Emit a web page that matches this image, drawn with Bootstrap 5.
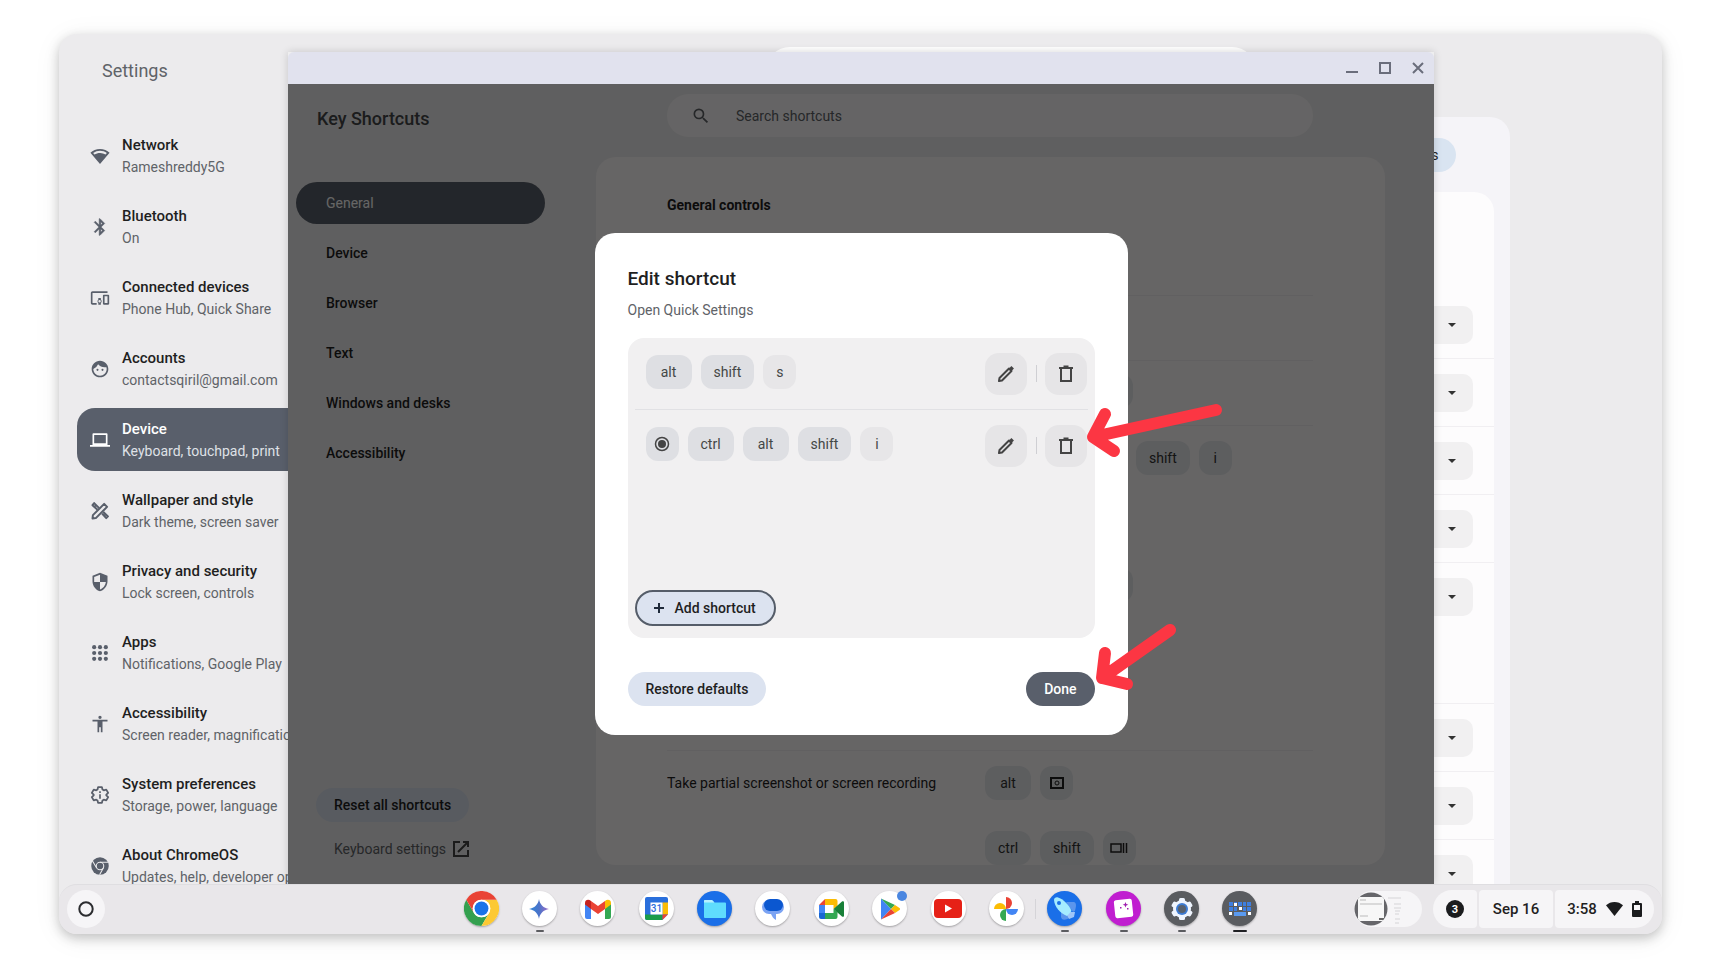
<!DOCTYPE html>
<html lang="en">
<head>
<meta charset="utf-8">
<meta name="viewport" content="width=device-width, initial-scale=1">
<title>Key Shortcuts</title>
<link href="https://cdn.jsdelivr.net/npm/bootstrap@5.3.0/dist/css/bootstrap.min.css" rel="stylesheet">
<style>
  :root { --slate: #595f6b; --tint: #dce3f0; --ink: #1f1f1f; --ink-2: #5f6368; }
  body { font-family: Roboto, "Liberation Sans", sans-serif; font-size: 14px; line-height: 20px; color: var(--ink); background: #fff; padding: 34px 59px; height: 100vh; min-height: 600px; overflow: hidden; }
  button, input, select { font: inherit; color: inherit; }
  svg { display: block; flex: none; }

  .os-screen { background: #ecebed; border-radius: 18px; box-shadow: 0 4px 12px rgba(0,0,0,.22), 0 4px 30px rgba(0,0,0,.06); }
  .os-desktop { min-height: 0; }

  /* Settings window */
  .set-side { width: 300px; }
  .set-title { font-size: 18px; line-height: 24px; color: var(--ink-2); padding: 25px 0 41px 43px; }
  .set-nav { padding-left: 18px; gap: 8px; }
  .set-item { height: 63px; padding-left: 13px; gap: 12px; border-radius: 18px; color: var(--ink); text-decoration: none; line-height: 22px; white-space: nowrap; }
  .set-item svg { width: 20px; height: 20px; fill: var(--slate); }
  .set-item strong { display: block; font-size: 15px; font-weight: 500; }
  .set-item span span { color: var(--ink-2); }
  .set-item.on { background: var(--slate); color: #fff; }
  .set-item.on svg { fill: #fff; }
  .set-item.on span span { color: #dfe1e6; }
  .set-search { width: 490px; height: 48px; margin-top: 13px; border: 0; border-radius: 24px; background: #fff; }
  .set-panel { width: 100%; max-width: 998px; margin-top: 22px; padding: 0 16px; background: #f5f4f8; border-radius: 20px 20px 0 0; }
  .set-bar { height: 75px; padding-right: 38px; }
  .set-chip { height: 34px; width: 90px; padding-right: 17px; border: 0; border-radius: 17px; background: #d9e4f1; text-align: right; }
  .set-card { background: #fdfcfd; border-radius: 20px 20px 0 0; padding-top: 99px; }
  .set-row { height: 68px; padding-right: 21px; border-bottom: 1px solid #f1eff2; }
  .set-gap { height: 73px; border-bottom: 1px solid #f1eff2; }
  .set-row select { width: 160px; height: 38px; border: 0; border-radius: 10px; appearance: none; background: #f1f0f1 url("data:image/svg+xml,%3Csvg xmlns='http://www.w3.org/2000/svg' viewBox='0 0 8 4'%3E%3Cpath fill='%23333' d='M0 0h8L4 4z'/%3E%3C/svg%3E") no-repeat right 17px center / 8px 4px; }

  /* Key Shortcuts window */
  .key-win { position: absolute; inset: 18px 228px 0 229px; box-shadow: 0 0 8px rgba(0,0,0,.16); background: #eeeeef; }
  .key-bar { height: 32px; background: #e1e2ee; border-radius: 6px 6px 0 0; padding-right: 8px; gap: 17px; }
  .key-bar button { border: 0; background: none; padding: 0; width: 16px; height: 16px; }
  .key-body { min-height: 0; }
  .key-side { width: 308px; padding: 0 51px 25px 8px; }
  .key-title { font-size: 18px; line-height: 24px; font-weight: 500; color: #45464a; padding: 23px 0 51px 21px; }
  .key-nav { gap: 8px; }
  .key-nav a { height: 42px; line-height: 42px; padding-left: 30px; border-radius: 21px; color: var(--ink); text-decoration: none; font-weight: 500; }
  .key-nav a.on { background: var(--slate); color: #fff; font-weight: 400; }
  .pill { height: 34px; border: 0; border-radius: 17px; background: var(--tint); padding: 0 18px; font-weight: 500; }
  .key-side .pill { margin-left: 20px; }
  .key-link { margin: 17px 0 0 38px; gap: 7px; color: #5f6368; text-decoration: none; }
  .key-main { padding: 10px 49px 19px 0; min-width: 0; }
  .key-search { height: 43px; margin: 0 72px 20px 71px; padding-left: 24px; gap: 25px; border-radius: 22px; background: #fdfbfc; }
  .key-search input { border: 0; background: none; outline: 0; padding: 0; }
  .key-search input::placeholder { color: #5f6368; opacity: 1; }
  .key-panel { background: #fffcfd; border-radius: 20px; padding: 0 72px 0 71px; min-height: 0; }
  .key-head { line-height: 20px; padding: 38px 0 15px; font-size: 14px; font-weight: 700; margin: 0; }
  .key-row { height: 65px; flex: none; }
  .key-row.rule { border-top: 1px solid #f2f1f3; }
  .key-row > span:first-child { flex: 0 0 318px; }
  .combo { gap: 9px; }
  .keycap { display: inline-flex; align-items: center; justify-content: center; min-width: 46px; height: 34px; padding: 0 13px; border-radius: 12px; background: #dedfe3; color: #444746; font: inherit; }
  .keycap.sq { min-width: 33px; padding: 0; }
  .keycap.soft { background: #e7e6e8; }
  .key-row .keycap { background: #e8eaed; color: #333; }
  .push-a { margin-left: 115px; }
  .push-b { margin-left: 151px; }

  /* Dialog */
  .scrim { position: absolute; inset: 32px 0 0 0; background: rgba(0,0,0,.6); }
  .dlg { position: relative; width: 533px; background: #fff; border-radius: 20px; padding: 33px 33px 29px; }
  .dlg h1 { font-size: 19px; line-height: 26px; font-weight: 500; margin: 0 0 8px; }
  .dlg p { margin: 0 0 18px; color: var(--ink-2); }
  .dlg-box { height: 300px; background: #f1f0f1; border-radius: 16px; margin-bottom: 34px; padding: 0 7px 12px; }
  .dlg-row { height: 71px; padding: 0 1px 0 11px; }
  .dlg-row + .dlg-row { border-top: 1px solid #e1e1e4; height: 72px; }
  .dlg-row .combo { padding-bottom: 3px; }
  .tool { width: 42px; height: 42px; border: 0; border-radius: 14px; background: #e6e5e7; padding: 0; display: flex; align-items: center; justify-content: center; }
  .tool-rule { width: 1px; height: 17px; background: #cfcfd3; margin: 0 8px 0 9px; }
  .add { height: 36px; border: 2px solid #555d69; border-radius: 18px; background: var(--tint); font-weight: 500; padding: 0 18px 0 15px; gap: 9px; }
  .done { background: var(--slate); color: #fff; }
  .callout-arrow { position: absolute; fill: none; stroke: #fc3643; stroke-width: 12; stroke-linecap: round; stroke-linejoin: round; pointer-events: none; }
  .arrow-delete { left: 480px; top: 165px; }
  .arrow-done { left: 490px; top: 385px; }

  /* Shelf */
  .shelf { display: grid; grid-template-columns: 1fr 794px 1fr; align-items: center; height: 50px; padding: 0 8px 2px; background: #e9e7ea; border-radius: 18px; border-top: 1px solid #dfdee1; position: relative; }
  .launch { width: 38px; height: 38px; border: 0; border-radius: 50%; background: #f6f5f7; padding: 0; display: flex; align-items: center; justify-content: center; }
  .app { position: relative; width: 35px; height: 35px; border: 0; border-radius: 50%; background: #fff; padding: 0; box-shadow: 0 1px 2px rgba(0,0,0,.3); display: flex; align-items: center; justify-content: center; }
  .app-blue { background: #1a6fe8; }
  .app-pink { background: #c01ed0; }
  .app-gray { background: #5a5c60; }
  .app.run::after { content: ""; position: absolute; bottom: -6px; left: 14px; width: 8px; height: 2px; border-radius: 1px; background: #5b5c60; }
  .app.now::after { left: 11px; width: 14px; background: #202124; }
  .app.split::before { content: ""; position: absolute; left: -12px; top: 8px; width: 1px; height: 20px; background: #d5d4d8; }
  .dot { position: absolute; right: 0; top: 0; width: 10px; height: 10px; border-radius: 50%; background: #4a86e0; }
  .tray { gap: 2px; font-size: 15px; font-weight: 500; white-space: nowrap; }
  .tray button { height: 38px; border: 0; background: #f6f5f7; font-weight: 500; padding: 0; display: flex; align-items: center; justify-content: center; border-radius: 4px; }
  .tray .peek { width: 68px; height: 36px; border-radius: 18px; margin-right: 9px; justify-content: flex-start; }
  .tray .notes { width: 44px; border-radius: 19px 4px 4px 19px; }
  .tray .day { width: 74px; }
  .tray .clock { width: 99px; gap: 9px; border-radius: 4px 19px 19px 4px; }
</style>
</head>
<body>
<main class="os-screen d-flex flex-column h-100">
  <div class="os-desktop position-relative flex-fill overflow-hidden">
    <section class="d-flex h-100 overflow-hidden" aria-label="Settings">
      <div class="set-side flex-shrink-0">
        <div class="set-title">Settings</div>
        <nav class="set-nav d-flex flex-column">
          <a href="#" class="set-item d-flex align-items-center"><svg viewBox="0 0 24 24"><path fill-rule="evenodd" d="M12 3.500C7.500 3.500 3.300 5.300.500 8.200L12 21.500 23.500 8.200C20.700 5.300 16.500 3.500 12 3.500zm0 2.300c3 0 5.900 1 8.200 2.600l-1.500 1.800A12 12 0 0 0 12 8.300c-2.500 0-4.800.7-6.700 1.900L3.800 8.400A14.500 14.500 0 0 1 12 5.800z"/></svg><span><strong>Network</strong><span>Rameshreddy5G</span></span></a>
          <a href="#" class="set-item d-flex align-items-center"><svg viewBox="0 0 24 24"><path stroke="#595f6b" stroke-width=".6" d="M17.700 7.700 12 2h-1v7.600L6.400 5 5 6.400l5.600 5.600L5 17.600 6.400 19l4.600-4.600V22h1l5.700-5.700-4.300-4.300 4.300-4.300zM13 5.800l1.900 1.900L13 9.600V5.800zm1.900 10.500L13 18.200v-3.800l1.900 1.900z"/></svg><span><strong>Bluetooth</strong><span>On</span></span></a>
          <a href="#" class="set-item d-flex align-items-center"><svg viewBox="0 0 24 24"><path fill-rule="evenodd" d="M3 6h18V4H3c-1.100 0-2 .9-2 2v12c0 1.100.9 2 2 2h5v-2H3V6zm10 6H10v1.800c-.6.500-1 1.300-1 2.200s.4 1.700 1 2.200V20h3v-1.800c.6-.5 1-1.300 1-2.200s-.4-1.700-1-2.200V12zm-1.500 5.500a1.500 1.500 0 1 1 0-3 1.500 1.500 0 0 1 0 3zM22 8h-5.500c-.5 0-1 .5-1 1v10c0 .5.5 1 1 1H22c.5 0 1-.5 1-1V9c0-.5-.5-1-1-1zm-1 10h-3.500v-8H21v8z"/></svg><span><strong>Connected devices</strong><span>Phone Hub, Quick Share</span></span></a>
          <a href="#" class="set-item d-flex align-items-center"><svg viewBox="0 0 24 24"><path d="M10.250 13a1.250 1.250 0 1 1-2.500 0 1.250 1.250 0 0 1 2.500 0zM15 11.750a1.250 1.250 0 1 0 0 2.500 1.250 1.250 0 0 0 0-2.500zM22 12c0 5.520-4.480 10-10 10S2 17.520 2 12 6.480 2 12 2s10 4.480 10 10zm-2 0c0-.78-.12-1.530-.33-2.240-.7.150-1.420.240-2.170.240-3.130 0-5.920-1.440-7.760-3.690A10 10 0 0 1 4 11.860V12c0 4.410 3.590 8 8 8s8-3.590 8-8z"/></svg><span><strong>Accounts</strong><span>contactsqiril@gmail.com</span></span></a>
          <a href="#" class="set-item on d-flex align-items-center"><svg viewBox="0 0 24 24"><path d="M21 18V5a1 1 0 0 0-1-1H4a1 1 0 0 0-1 1v13H0v2h24v-2zM5 6h14v10H5z"/></svg><span><strong>Device</strong><span>Keyboard, touchpad, print</span></span></a>
          <a href="#" class="set-item d-flex align-items-center"><svg viewBox="0 0 24 24"><g fill="none" stroke="#595f6b" stroke-width="2.400" stroke-linejoin="round"><path d="M3 21l.5-4L17 3.500 20.500 7 7 20.500z"/><path d="M9 10.500 3 5 5 2.500 11 8.500M7.500 4.500 6 6M14.500 15l5 5.500 2-2L16 13M19 15.500l-1.500 1.500"/></g></svg><span><strong>Wallpaper and style</strong><span>Dark theme, screen saver</span></span></a>
          <a href="#" class="set-item d-flex align-items-center"><svg viewBox="0 0 24 24"><path fill-rule="evenodd" d="M12 1 3 4.500v6.500c0 5.550 3.840 10.740 9 12 5.160-1.260 9-6.450 9-12V4.500zM12 3.200V12H5c.5 4.100 3.300 7.800 7 8.900V12h7V5.900z" transform="matrix(-1 0 0 1 24 0)"/></svg><span><strong>Privacy and security</strong><span>Lock screen, controls</span></span></a>
          <a href="#" class="set-item d-flex align-items-center"><svg viewBox="0 0 24 24"><g><circle cx="5" cy="5" r="2.500"/><circle cx="12" cy="5" r="2.500"/><circle cx="19" cy="5" r="2.500"/><circle cx="5" cy="12" r="2.500"/><circle cx="12" cy="12" r="2.500"/><circle cx="19" cy="12" r="2.500"/><circle cx="5" cy="19" r="2.500"/><circle cx="12" cy="19" r="2.500"/><circle cx="19" cy="19" r="2.500"/></g></svg><span><strong>Apps</strong><span>Notifications, Google Play</span></span></a>
          <a href="#" class="set-item d-flex align-items-center"><svg viewBox="0 0 24 24"><path d="M12 2a2 2 0 1 1 0 4 2 2 0 0 1 0-4zm9 7h-6v13h-2v-6h-2v6H9V9H3V7h18v2z"/></svg><span><strong>Accessibility</strong><span>Screen reader, magnification</span></span></a>
          <a href="#" class="set-item d-flex align-items-center"><svg viewBox="0 0 24 24"><path fill="none" stroke="#595f6b" stroke-width="2.200" stroke-linejoin="round" d="M9.700 2.500h4.600l.7 3 1.500.9 3-.9 2.300 4-2.200 2v1l2.200 2-2.300 4-3-.9-1.500.9-.7 3H9.700l-.7-3-1.500-.9-3 .9-2.300-4 2.200-2v-1l-2.200-2 2.300-4 3 .9 1.500-.9z"/><path d="M11 7.500h2v2h-2zM11 11h2v5.500h-2z"/></svg><span><strong>System preferences</strong><span>Storage, power, language</span></span></a>
          <a href="#" class="set-item d-flex align-items-center"><svg viewBox="0 0 24 24"><circle cx="12" cy="12" r="10.500"/><g fill="none" stroke="#ecebed" stroke-width="1.300"><circle cx="12" cy="12" r="4.500"/><path d="M12 7.500h10M8 14.300 3 6M16 14.300 11.500 22.500"/></g></svg><span><strong>About ChromeOS</strong><span>Updates, help, developer options</span></span></a>
        </nav>
      </div>
      <div class="flex-fill d-flex flex-column align-items-center">
        <input class="set-search flex-shrink-0" type="search" aria-label="Search settings">
        <div class="set-panel flex-fill">
          <div class="set-bar d-flex align-items-center justify-content-end"><button type="button" class="set-chip">s</button></div>
          <div class="set-card">
            <div class="set-row d-flex align-items-center justify-content-end"><select aria-label="Key 1"></select></div>
            <div class="set-row d-flex align-items-center justify-content-end"><select aria-label="Key 2"></select></div>
            <div class="set-row d-flex align-items-center justify-content-end"><select aria-label="Key 3"></select></div>
            <div class="set-row d-flex align-items-center justify-content-end"><select aria-label="Key 4"></select></div>
            <div class="set-row d-flex align-items-center justify-content-end border-0"><select aria-label="Key 5"></select></div>
            <div class="set-gap"></div>
            <div class="set-row d-flex align-items-center justify-content-end"><select aria-label="Key 6"></select></div>
            <div class="set-row d-flex align-items-center justify-content-end"><select aria-label="Key 7"></select></div>
            <div class="set-row d-flex align-items-center justify-content-end"><select aria-label="Key 8"></select></div>
          </div>
        </div>
      </div>
    </section>

    <section class="key-win d-flex flex-column" aria-label="Key Shortcuts">
      <header class="key-bar d-flex align-items-center justify-content-end flex-shrink-0">
        <button type="button" aria-label="Minimize"><svg width="16" height="16" viewBox="0 0 16 16"><path d="M2 12h12" stroke="#6a6d7b" stroke-width="2"/></svg></button>
        <button type="button" aria-label="Maximize"><svg width="16" height="16" viewBox="0 0 16 16"><path d="M3 3h10v10H3z" fill="none" stroke="#6a6d7b" stroke-width="2"/></svg></button>
        <button type="button" aria-label="Close"><svg width="16" height="16" viewBox="0 0 16 16"><path d="m3 3 10 10M13 3 3 13" stroke="#6a6d7b" stroke-width="2"/></svg></button>
      </header>
      <div class="key-body d-flex flex-fill">
        <div class="key-side d-flex flex-column flex-shrink-0">
          <div class="key-title">Key Shortcuts</div>
          <nav class="key-nav d-flex flex-column">
            <a href="#" class="on">General</a>
            <a href="#">Device</a>
            <a href="#">Browser</a>
            <a href="#">Text</a>
            <a href="#">Windows and desks</a>
            <a href="#">Accessibility</a>
          </nav>
          <button type="button" class="pill mt-auto align-self-start">Reset all shortcuts</button>
          <a href="#" class="key-link d-flex align-items-center">Keyboard settings <svg width="16" height="16" viewBox="0 0 16 16" fill="none" stroke="#444" stroke-width="2"><path d="M7 1H1v14h14V9M10 1h5v5M15 1 5 11"/></svg></a>
        </div>
        <div class="key-main d-flex flex-column flex-fill">
          <div class="key-search d-flex align-items-center flex-shrink-0">
            <svg width="20" height="20" viewBox="0 0 24 24" fill="#5f6368"><path d="M15.500 14h-.79l-.28-.27A6.470 6.470 0 0 0 16 9.500 6.500 6.500 0 1 0 9.500 16c1.610 0 3.090-.59 4.230-1.570l.27.28v.79l5 4.990L20.490 19l-4.990-5zm-6 0C7.010 14 5 11.990 5 9.500S7.010 5 9.500 5 14 7.010 14 9.500 11.990 14 9.500 14z"/></svg>
            <input class="flex-fill" type="search" aria-label="Search shortcuts" placeholder="Search shortcuts">
          </div>
          <div class="key-panel d-flex flex-column flex-fill overflow-hidden">
            <h2 class="key-head">General controls</h2>
            <div class="key-row"></div>
            <div class="key-row rule"></div>
            <div class="key-row rule d-flex align-items-center"><span></span><div class="push-a"><span class="keycap sq"></span></div></div>
            <div class="key-row rule d-flex align-items-center"><span></span><div class="combo push-b d-flex"><kbd class="keycap">shift</kbd><kbd class="keycap sq">i</kbd></div></div>
            <div class="key-row"></div>
            <div class="key-row d-flex align-items-center"><span></span><div class="push-a"><span class="keycap sq"></span></div></div>
            <div class="key-row"></div>
            <div class="key-row"></div>
            <div class="key-row rule d-flex align-items-center"><span>Take partial screenshot or screen recording</span>
              <div class="combo d-flex"><kbd class="keycap">alt</kbd><kbd class="keycap sq" aria-label="screenshot"><svg width="14" height="12" viewBox="0 0 14 12" fill="none" stroke="#222"><path stroke-width="2" d="M1 1h12v10H1z"/><circle cx="7" cy="6" r="2"/></svg></kbd></div></div>
            <div class="key-row d-flex align-items-center"><span></span>
              <div class="combo d-flex"><kbd class="keycap">ctrl</kbd><kbd class="keycap">shift</kbd><kbd class="keycap sq" aria-label="overview"><svg width="18" height="10" viewBox="0 0 18 10" fill="none" stroke="#222" stroke-width="1.500"><path d="M1 1h10v8H1zM13.500 0v10M16.500 0v10"/></svg></kbd></div></div>
          </div>
        </div>
      </div>

      <div class="scrim d-flex align-items-center justify-content-center">
        <div class="dlg" role="dialog" aria-labelledby="dlg-title">
          <h1 id="dlg-title">Edit shortcut</h1>
          <p>Open Quick Settings</p>
          <div class="dlg-box d-flex flex-column">
            <div class="dlg-row d-flex align-items-center">
              <div class="combo d-flex me-auto"><kbd class="keycap">alt</kbd><kbd class="keycap">shift</kbd><kbd class="keycap sq soft">s</kbd></div>
              <button type="button" class="tool" aria-label="Edit"><svg width="18" height="18" viewBox="0 0 18 18" fill="none" stroke="#444" stroke-width="2" stroke-linejoin="round"><path d="M2 16l.5-3L12 3.500 14.500 6 5 15.500z"/><path d="m13 2.500 2.500 2.500" stroke-width="4"/></svg></button><span class="tool-rule"></span>
              <button type="button" class="tool" aria-label="Delete"><svg width="18" height="18" viewBox="0 0 18 18" fill="none" stroke="#444" stroke-width="2"><path d="M4 3.500v12.500h10V3.500M2 3h14M6.500 1.500h5"/></svg></button>
            </div>
            <div class="dlg-row d-flex align-items-center">
              <div class="combo d-flex me-auto"><kbd class="keycap sq" aria-label="launcher"><svg width="16" height="16" viewBox="0 0 16 16"><circle cx="8" cy="8" r="6.500" fill="none" stroke="#444" stroke-width="1.500"/><circle cx="8" cy="8" r="4" fill="#444"/></svg></kbd><kbd class="keycap">ctrl</kbd><kbd class="keycap">alt</kbd><kbd class="keycap">shift</kbd><kbd class="keycap sq soft">i</kbd></div>
              <button type="button" class="tool" aria-label="Edit"><svg width="18" height="18" viewBox="0 0 18 18" fill="none" stroke="#444" stroke-width="2" stroke-linejoin="round"><path d="M2 16l.5-3L12 3.500 14.500 6 5 15.500z"/><path d="m13 2.500 2.500 2.500" stroke-width="4"/></svg></button><span class="tool-rule"></span>
              <button type="button" class="tool" aria-label="Delete"><svg width="18" height="18" viewBox="0 0 18 18" fill="none" stroke="#444" stroke-width="2"><path d="M4 3.500v12.500h10V3.500M2 3h14M6.500 1.500h5"/></svg></button>
            </div>
            <button type="button" class="add d-flex align-items-center align-self-start mt-auto"><svg width="14" height="14" viewBox="0 0 14 14" stroke="#1f2a3a" stroke-width="2"><path d="M7 2v10M2 7h10"/></svg>Add shortcut</button>
          </div>
          <div class="d-flex justify-content-between">
            <button type="button" class="pill">Restore defaults</button>
            <button type="button" class="pill done">Done</button>
          </div>
          <svg class="callout-arrow arrow-delete" width="160" height="70"><path d="M141 12 18 39M30 16 18 39l21 14"/></svg>
          <svg class="callout-arrow arrow-done" width="110" height="80"><path d="M85 12 17 60M20 35 17 60l25 6"/></svg>
        </div>
      </div>
    </section>
  </div>

  <footer class="shelf flex-shrink-0">
    <button type="button" class="launch" aria-label="Launcher"><svg width="16" height="16" viewBox="0 0 16 16"><circle cx="8" cy="8" r="6.700" fill="none" stroke="#2b2c2f" stroke-width="2"/></svg></button>
    <div class="d-flex justify-content-between">
      <button type="button" class="app" aria-label="Chrome"><svg width="35" height="35" viewBox="0 0 48 48"><path fill="#34a04f" d="M3.200 36A24 24 0 0 0 24 48l10.400-18a12 12 0 0 1-20.800 0L3.200 12a24 24 0 0 0 0 24z"/><path fill="#fcc934" d="M34.400 30 24 48a24 24 0 0 0 20.800-36H24a12 12 0 0 1 10.400 18z"/><path fill="#e94335" d="M13.600 30 3.200 12a24 24 0 0 1 41.600 0H24a12 12 0 0 0-10.400 18z"/><circle cx="24" cy="24" r="12" fill="#fff"/><circle cx="24" cy="24" r="9.500" fill="#1a73e8"/></svg></button>
      <button type="button" class="app run" aria-label="Gemini"><svg width="20" height="20" viewBox="0 0 20 20"><defs><linearGradient id="gem"><stop offset="0" stop-color="#2f86d8"/><stop offset=".5" stop-color="#4b73c9"/><stop offset="1" stop-color="#a070c8"/></linearGradient></defs><path fill="url(#gem)" d="M10 0c.8 5.500 4.500 9.200 10 10-5.500.8-9.200 4.500-10 10-.8-5.500-4.500-9.200-10-10 5.500-.8 9.200-4.500 10-10z"/></svg></button>
      <button type="button" class="app" aria-label="Gmail"><svg width="26" height="20" viewBox="0 0 26 20"><path fill="#4285f4" d="M0 4v14a2 2 0 0 0 2 2h4V8z"/><path fill="#34a853" d="M20 8v12h4a2 2 0 0 0 2-2V4z"/><path fill="#fbbc04" d="M20 2v8l6-4.500V4c0-3.200-3.500-4.300-6-2z"/><path fill="#ea4335" d="M6 10V2l7 5 7-5v8l-7 5z"/><path fill="#c5221f" d="M0 4v1.500L6 10V2C3.500-.3 0 .8 0 4z"/></svg></button>
      <button type="button" class="app" aria-label="Calendar"><svg width="23" height="23" viewBox="0 0 23 23"><rect width="23" height="23" rx="2" fill="#2a6fdc"/><path fill="#fbbc04" d="M17.500 5.500H23v12h-5.500z"/><path fill="#1a9c4b" d="M0 17.500h17.500V23H2a2 2 0 0 1-2-2z"/><path fill="#ea4335" d="M17.500 17.500H23L17.500 23z"/><path fill="#fff" d="M5.500 5.500h12v12h-12zM23 17.500V23h-5.500z"/><text x="11.500" y="15" font-size="10" font-weight="500" text-anchor="middle" fill="#2a6fdc">31</text></svg></button>
      <button type="button" class="app app-blue" aria-label="Files"><svg width="22" height="18" viewBox="0 0 22 18"><path fill="#5fdcfd" d="M1 0h7l2.500 2.500H21a1 1 0 0 1 1 1V17a1 1 0 0 1-1 1H1a1 1 0 0 1-1-1V1a1 1 0 0 1 1-1z"/><path fill="#b5efff" d="M1 0h7l2.500 2.500H0V1a1 1 0 0 1 1-1z"/></svg></button>
      <button type="button" class="app" aria-label="Messages"><svg width="24" height="22" viewBox="0 0 24 22"><path fill="#7ba3f3" d="M8 2h8a7 7 0 0 1 0 14h-1v6c-3-1.500-4-4-5-6H8A7 7 0 0 1 8 2z"/><rect x="3" y="1" width="19" height="12" rx="6" fill="#0b57d0"/></svg></button>
      <button type="button" class="app" aria-label="Meet"><svg width="25" height="20" viewBox="0 0 25 20"><path fill="#ea4335" d="M0 6 6 0v6z"/><path fill="#4285f4" d="M0 6h6v8H0z"/><path fill="#1967d2" d="M0 14h6v6H2a2 2 0 0 1-2-2z"/><path fill="#fbbc04" d="M6 0h10.500a2 2 0 0 1 2 2v5l-4 3V6H6z"/><path fill="#34a853" d="M6 14h8.500v-4l4 3v5a2 2 0 0 1-2 2H6z"/><path fill="#188038" d="m14.500 10 8.500-7.500c.8-.7 2-.3 2 .8v13.400c0 1.100-1.200 1.500-2 .8z"/></svg></button>
      <button type="button" class="app" aria-label="Play Store"><svg width="20" height="22" viewBox="0 0 20 22"><path fill="#4285f4" d="M1 .5v21L11 11z"/><path fill="#34a853" d="M1 .5 11 11l4-4z"/><path fill="#fbbc04" d="m15 7-4 4 4 4 4.500-3c.7-.5.700-1.500 0-2z"/><path fill="#ea4335" d="M1 21.500 11 11l4 4z"/></svg><span class="dot"></span></button>
      <button type="button" class="app" aria-label="YouTube"><svg width="28" height="19" viewBox="0 0 28 19"><rect width="28" height="19" rx="4" fill="#e62117"/><path fill="#fff" d="m11 5.500 7 4-7 4z"/></svg></button>
      <button type="button" class="app" aria-label="Photos"><svg width="24" height="24" viewBox="0 0 24 24"><path fill="#ea4335" d="M12 0a6 6 0 0 1 0 12z"/><path fill="#4285f4" d="M24 12a6 6 0 0 1-12 0z"/><path fill="#34a853" d="M12 24a6 6 0 0 1 0-12z"/><path fill="#fbbc04" d="M0 12a6 6 0 0 1 12 0z"/></svg></button>
      <button type="button" class="app app-blue run split" aria-label="Explore"><svg width="26" height="26" viewBox="0 0 26 26"><path fill="#5b95ec" d="M14 6h8c3 1 2 5 1 9l-2 1zM9 14v7c1 4 5 3 8 1l1-3z"/><path fill="#9fc6f8" d="m17 16 6 0-1 5-5 2-2-4z"/><path fill="#a5ecff" d="M2 4c0-2 2-3 4-2.500 5 1.500 11 7 13.500 13.500L15 20C8 17 2.500 11 2 4z"/><circle cx="7" cy="7" r="2" fill="#1a6fe8"/></svg></button>
      <button type="button" class="app app-pink run" aria-label="Screencast"><svg width="21" height="21" viewBox="0 0 21 21"><rect x="1.500" y="1.500" width="18" height="18" rx="2" fill="#fff" transform="rotate(-6 10 10)"/><path fill="#a01eb0" d="m12.500 4 .8 2 2 .8-2 .8-.8 2-.8-2-2-.8 2-.8zM7 9h1.500v1.500H7zM14 10h1.500v1.500H14z"/></svg></button>
      <button type="button" class="app app-gray run" aria-label="Settings"><svg width="24" height="24" viewBox="0 0 24 24"><g fill="#eef4fe"><circle cx="12" cy="12" r="9"/><rect x="9" y="1" width="6" height="22" rx="1.500"/><rect x="9" y="1" width="6" height="22" rx="1.500" transform="rotate(60 12 12)"/><rect x="9" y="1" width="6" height="22" rx="1.500" transform="rotate(120 12 12)"/></g><circle cx="12" cy="12" r="6" fill="#3c7ad2"/><circle cx="12" cy="12" r="4" fill="#56606e"/></svg></button>
      <button type="button" class="app app-gray run now" aria-label="Key Shortcuts"><svg width="24" height="14" viewBox="0 0 24 14"><g fill="#3f7fe0"><path d="M1 0h4v4H1zM6 0h3v4H6zM10 0h4v4h-4zM15 0h3v4h-3zM19 0h4v4h-4zM1 5h4v4H1zM6 5h3v4H6zM15 5h3v4h-3zM19 5h4v4h-4z"/><path fill="#5a9af0" d="M6 10h12v4H6z"/></g><g fill="#fff"><path d="M6 1h3v3H6zM11 5h3v3h-3zM1 10h3v3H1zM20 10h3v3h-3z"/></g></svg></button>
    </div>
    <div class="tray d-flex align-items-center justify-content-end">
      <button type="button" class="peek" aria-label="Recent screenshot"><svg width="66" height="34" viewBox="0 0 66 34"><defs><clipPath id="pk"><circle cx="17" cy="17" r="16.500"/></clipPath></defs><g clip-path="url(#pk)"><path fill="#66666a" d="M0 0h34v34H0z"/><path fill="#f7f7f7" d="M4 5h26v24H4z"/><path stroke="#bbb" d="M6 8h6M6 12h22M6 24h8"/><path stroke="#666" stroke-width="2" d="M25 27h5"/></g><path stroke="#d5d4d7" d="M34 6h13M40 12h7M40 16h7M41 19h5M41 22h4M41 27h5M41 31h4"/></svg></button>
      <button type="button" class="notes" aria-label="3 notifications"><svg width="18" height="18" viewBox="0 0 18 18"><circle cx="9" cy="9" r="9" fill="#1b1c1e"/><text x="9" y="13" font-size="11" font-weight="700" text-anchor="middle" fill="#fff">3</text></svg></button>
      <button type="button" class="day">Sep 16</button>
      <button type="button" class="clock">3:58<svg width="17" height="14" viewBox="0 0 17 14"><path fill="#1b1c1e" d="M8.500 0C5.300 0 2.300 1.200 0 3.300L8.500 14 17 3.300C14.700 1.200 11.700 0 8.500 0z"/></svg><svg width="10" height="16" viewBox="0 0 10 16"><path fill="#1b1c1e" fill-rule="evenodd" d="M3 0h4v2h2a1 1 0 0 1 1 1v12a1 1 0 0 1-1 1H1a1 1 0 0 1-1-1V3a1 1 0 0 1 1-1h2zM2 4v5h6V4z"/></svg></button>
    </div>
  </footer>
</main>
<script src="https://cdn.jsdelivr.net/npm/bootstrap@5.3.0/dist/js/bootstrap.bundle.min.js"></script>
</body>
</html>
